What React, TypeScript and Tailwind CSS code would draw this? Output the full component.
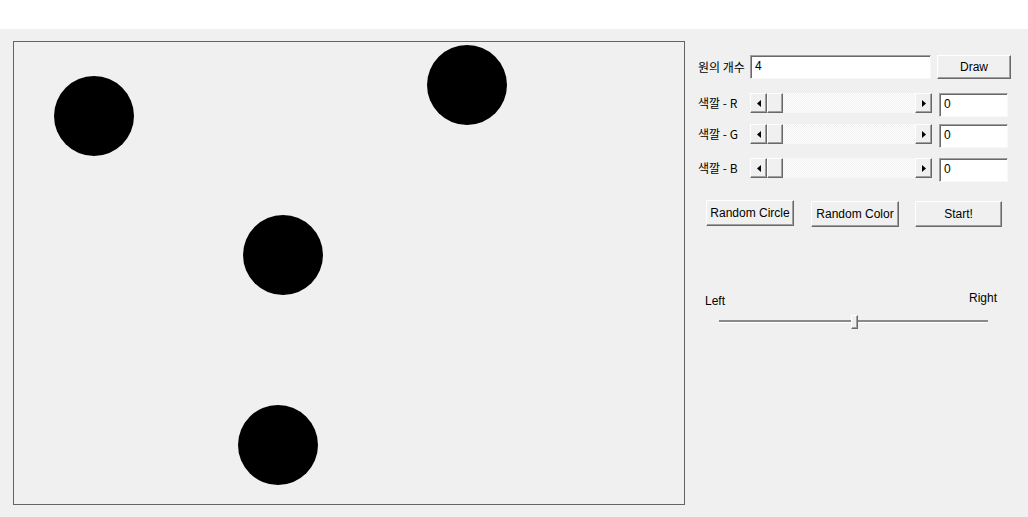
const circles = [
  { x: 40, y: 34 },
  { x: 413, y: 3 },
  { x: 229, y: 173 },
  { x: 224, y: 363 },
];

const ui = { fontFamily: '"Liberation Sans", Arial, sans-serif' };
const ko = { fontFamily: '"Noto Sans CJK KR", "Liberation Sans", sans-serif' };

function Btn({ label, w }: { label: string; w: string }) {
  return (
    <button
      style={ui}
      className={`${w} h-[26px] bg-[#f0f0f0] text-[12px] text-black border border-t-white border-l-white border-b-[#696969] border-r-[#696969] shadow-[inset_-1px_-1px_0_#a0a0a0]`}
    >
      {label}
    </button>
  );
}

function TextBox({ value, w, h }: { value: string; w: string; h: string }) {
  return (
    <div
      style={ui}
      className={`${w} ${h} shrink-0 bg-white border border-t-[#a0a0a0] border-l-[#a0a0a0] border-b-[#f8f8f8] border-r-[#f8f8f8] shadow-[inset_1px_1px_0_#696969] pl-[4px] pt-[3px] text-[12px] leading-[14px] text-black`}
    >
      {value}
    </div>
  );
}

function ArrowBtn({ dir }: { dir: "left" | "right" }) {
  return (
    <div className="w-[17px] h-full bg-[#f0f0f0] border border-t-white border-l-white border-b-[#696969] border-r-[#696969] shadow-[inset_-1px_-1px_0_#a0a0a0] flex items-center justify-center">
      <svg width="4" height="7" viewBox="0 0 4 7">
        {dir === "left" ? <path d="M4 0 L0 3.5 L4 7 Z" fill="#000" /> : <path d="M0 0 L4 3.5 L0 7 Z" fill="#000" />}
      </svg>
    </div>
  );
}

function ScrollBar() {
  return (
    <div className="w-[182px] h-[20px] flex shrink-0">
      <ArrowBtn dir="left" />
      <div className="w-[16px] h-full bg-[#f0f0f0] border border-t-white border-l-white border-b-[#696969] border-r-[#696969] shadow-[inset_-1px_-1px_0_#a0a0a0]" />
      <div className="flex-1 h-full bg-[repeating-conic-gradient(#f0f0f0_0_25%,#ffffff_0_50%)] bg-[length:2px_2px]" />
      <ArrowBtn dir="right" />
    </div>
  );
}

function ColorRow({ ch, mt }: { ch: string; mt: string }) {
  return (
    <div className={`flex items-start h-[20px] ${mt}`}>
      <div style={ko} className="w-[52px] h-[20px] flex items-center text-[12px] text-black">
        색깔 - {ch}
      </div>
      <ScrollBar />
      <div className="ml-[7px]">
        <TextBox value="0" w="w-[69px]" h="h-[24px]" />
      </div>
    </div>
  );
}

export default function App() {
  return (
    <div className="w-[1028px] h-[517px] bg-[#f0f0f0] flex flex-col overflow-hidden">
      <div className="h-[29px] bg-white shrink-0" />
      <div className="flex pl-[13px] pt-[12px]">
        <div className="relative w-[672px] h-[464px] border border-[#646464] shrink-0">
          {circles.map((c, i) => (
            <div
              key={i}
              className="absolute w-[80px] h-[80px] rounded-full bg-black"
              style={{ left: c.x, top: c.y }}
            />
          ))}
        </div>

        <div className="flex flex-col pl-[13px] w-[343px]">
          <div className="flex items-center h-[24px] mt-[14px]">
            <div style={ko} className="w-[52px] text-[12px] text-black">
              원의 개수
            </div>
            <TextBox value="4" w="w-[181px]" h="h-[24px]" />
            <button
              style={ui}
              className="ml-[6px] w-[74px] h-[24px] bg-[#f0f0f0] text-[12px] text-black border border-t-white border-l-white border-b-[#696969] border-r-[#696969] shadow-[inset_-1px_-1px_0_#a0a0a0]"
            >
              Draw
            </button>
          </div>

          <ColorRow ch="R" mt="mt-[14px]" />
          <ColorRow ch="G" mt="mt-[11px]" />
          <ColorRow ch="B" mt="mt-[14px]" />

          <div className="flex pl-[8px] mt-[22px]">
            <Btn label="Random Circle" w="w-[88px]" />
            <div className="ml-[17px]">
              <Btn label="Random Color" w="w-[88px]" />
            </div>
            <div className="ml-[16px]">
              <Btn label="Start!" w="w-[87px]" />
            </div>
          </div>

          <div className="mt-[63px] pl-[7px] w-[299px]">
            <div style={ui} className="flex justify-between items-start h-[19px] text-[12px] leading-[16px] text-black">
              <span className="mt-[3px]">Left</span>
              <span>Right</span>
            </div>
            <div className="relative ml-[14px] w-[269px] h-[16px] mt-[4px] flex items-center">
              <div className="w-full h-[3px] bg-[#8a8a8a] border-b border-b-white" />
              <div className="absolute left-[132px] top-[2px] w-[7px] h-[14px] bg-[#f0f0f0] border border-t-white border-l-white border-b-[#696969] border-r-[#696969] shadow-[inset_-1px_-1px_0_#a0a0a0]" />
            </div>
          </div>
        </div>
      </div>
    </div>
  );
}
